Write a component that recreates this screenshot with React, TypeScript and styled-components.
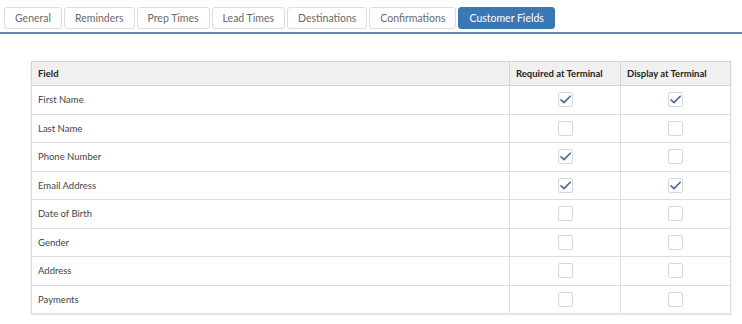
import styled, { createGlobalStyle } from 'styled-components';

const GlobalStyle = createGlobalStyle`
  html, body {
    margin: 0;
    padding: 0;
    background: #ffffff;
  }
  body {
    font-family: Lato, 'Open Sans', sans-serif;
    color: #333333;
  }
`;

const tabs = [
  'General',
  'Reminders',
  'Prep Times',
  'Lead Times',
  'Destinations',
  'Confirmations',
  'Customer Fields',
];

const fields: { name: string; required: boolean; display: boolean }[] = [
  { name: 'First Name', required: true, display: true },
  { name: 'Last Name', required: false, display: false },
  { name: 'Phone Number', required: true, display: false },
  { name: 'Email Address', required: true, display: true },
  { name: 'Date of Birth', required: false, display: false },
  { name: 'Gender', required: false, display: false },
  { name: 'Address', required: false, display: false },
  { name: 'Payments', required: false, display: false },
];

const Page = styled.div`
  width: 742px;
  height: 324px;
  overflow: hidden;
`;

const TabBar = styled.div`
  display: flex;
  gap: 2px;
  padding: 7px 0 3px 4px;
  border-bottom: 2px solid #6a88a6;
`;

const Tab = styled.div<{ $active?: boolean }>`
  height: 22px;
  box-sizing: border-box;
  display: flex;
  align-items: center;
  padding: 0 10px;
  font-size: 10.5px;
  border-radius: 3px;
  border: 1px solid ${(p) => (p.$active ? '#3a78b5' : '#dddddd')};
  background: ${(p) => (p.$active ? '#3a78b5' : '#ffffff')};
  color: ${(p) => (p.$active ? '#ffffff' : '#6a6a6a')};
  white-space: nowrap;
`;

const Content = styled.div`
  padding: 27px 11px 0 31px;
`;

const Table = styled.table`
  width: 700px;
  border-collapse: collapse;
  border: 1px solid #cccccc;
  box-shadow: 0 1px 2px rgba(0, 0, 0, 0.12);
  table-layout: fixed;
  font-size: 9.5px;
`;

const HeadCell = styled.th<{ $w?: number }>`
  width: ${(p) => (p.$w ? `${p.$w}px` : 'auto')};
  height: 24px;
  box-sizing: border-box;
  padding: 0 6px;
  text-align: left;
  font-weight: 700;
  color: #222222;
  background: #f0f0f0;
  border: 1px solid #d4d4d4;
  white-space: nowrap;
`;

const Cell = styled.td<{ $center?: boolean }>`
  height: 28.5px;
  box-sizing: border-box;
  padding: 0 6px;
  color: #444444;
  border: 1px solid #dddddd;
  text-align: ${(p) => (p.$center ? 'center' : 'left')};
  vertical-align: middle;
`;

const Box = styled.span`
  display: inline-flex;
  align-items: center;
  justify-content: center;
  width: 15px;
  height: 15px;
  box-sizing: border-box;
  border: 1px solid #d8d8d8;
  border-radius: 2px;
  background: #ffffff;
  vertical-align: middle;
`;

const Check = ({ on }: { on: boolean }) => (
  <Box>
    {on && (
      <svg width="13" height="13" viewBox="0 0 13 13">
        <polyline
          points="2,6.8 5,9.6 11.2,3.2"
          fill="none"
          stroke="#46689a"
          strokeWidth="1.6"
          strokeLinecap="round"
          strokeLinejoin="round"
        />
      </svg>
    )}
  </Box>
);

export default function App() {
  return (
    <Page>
      <GlobalStyle />
      <TabBar>
        {tabs.map((t) => (
          <Tab key={t} $active={t === 'Customer Fields'}>
            {t}
          </Tab>
        ))}
      </TabBar>
      <Content>
        <Table>
          <thead>
            <tr>
              <HeadCell>Field</HeadCell>
              <HeadCell $w={111}>Required at Terminal</HeadCell>
              <HeadCell $w={110}>Display at Terminal</HeadCell>
            </tr>
          </thead>
          <tbody>
            {fields.map((f) => (
              <tr key={f.name}>
                <Cell>{f.name}</Cell>
                <Cell $center>
                  <Check on={f.required} />
                </Cell>
                <Cell $center>
                  <Check on={f.display} />
                </Cell>
              </tr>
            ))}
          </tbody>
        </Table>
      </Content>
    </Page>
  );
}
